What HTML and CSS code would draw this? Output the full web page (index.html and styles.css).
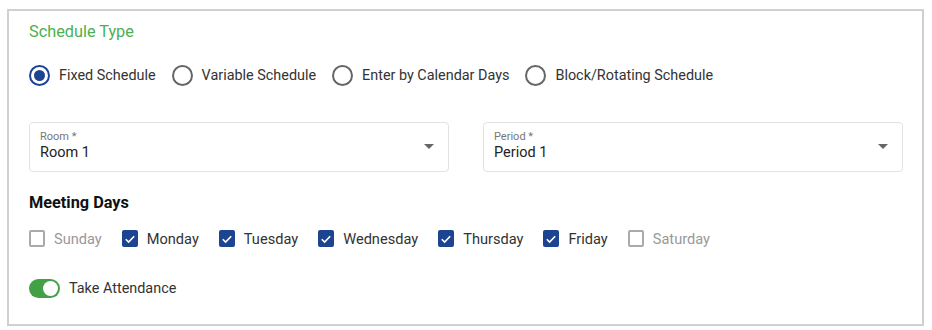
FILE: index.html
```html
<!DOCTYPE html>
<html>
<head>
<meta charset="utf-8">
<link rel="stylesheet" href="styles.css">
</head>
<body>
<div class="card">
  <div class="title">Schedule Type</div>
  <div class="radios">
    <label class="radio"><span class="circle checked"></span>Fixed Schedule</label>
    <label class="radio"><span class="circle"></span>Variable Schedule</label>
    <label class="radio"><span class="circle"></span>Enter by Calendar Days</label>
    <label class="radio"><span class="circle"></span>Block/Rotating Schedule</label>
  </div>
  <div class="selects">
    <div class="select">
      <div class="sel-text">
        <div class="sel-label">Room *</div>
        <div class="sel-value">Room 1</div>
      </div>
      <span class="arrow"></span>
    </div>
    <div class="select">
      <div class="sel-text">
        <div class="sel-label">Period *</div>
        <div class="sel-value">Period 1</div>
      </div>
      <span class="arrow"></span>
    </div>
  </div>
  <div class="section">Meeting Days</div>
  <div class="days">
    <label class="day off"><span class="box"></span>Sunday</label>
    <label class="day"><span class="box checked"><svg viewBox="0 0 16 16" width="16" height="16"><path d="M3.8 8.2 L6.6 11 L12.2 5.2" fill="none" stroke="#fff" stroke-width="1.6"/></svg></span>Monday</label>
    <label class="day"><span class="box checked"><svg viewBox="0 0 16 16" width="16" height="16"><path d="M3.8 8.2 L6.6 11 L12.2 5.2" fill="none" stroke="#fff" stroke-width="1.6"/></svg></span>Tuesday</label>
    <label class="day"><span class="box checked"><svg viewBox="0 0 16 16" width="16" height="16"><path d="M3.8 8.2 L6.6 11 L12.2 5.2" fill="none" stroke="#fff" stroke-width="1.6"/></svg></span>Wednesday</label>
    <label class="day"><span class="box checked"><svg viewBox="0 0 16 16" width="16" height="16"><path d="M3.8 8.2 L6.6 11 L12.2 5.2" fill="none" stroke="#fff" stroke-width="1.6"/></svg></span>Thursday</label>
    <label class="day"><span class="box checked"><svg viewBox="0 0 16 16" width="16" height="16"><path d="M3.8 8.2 L6.6 11 L12.2 5.2" fill="none" stroke="#fff" stroke-width="1.6"/></svg></span>Friday</label>
    <label class="day off"><span class="box"></span>Saturday</label>
  </div>
  <div class="toggle-row">
    <span class="toggle"><span class="knob"></span></span>
    <span class="toggle-label">Take Attendance</span>
  </div>
</div>
</body>
</html>
```
FILE: styles.css
```css
* { box-sizing: border-box; }
body {
  margin: 0;
  background: #fff;
  font-family: Roboto, "Liberation Sans", sans-serif;
  color: #333;
}
.card {
  margin: 9px 8px 0 7px;
  height: 317px;
  border: 2px solid #d0d0d0;
  padding: 11px 19px 0 20px;
}
.title {
  font-size: 16.3px;
  line-height: 20px;
  color: #4caf50;
}
.radios {
  display: flex;
  gap: 16px;
  margin-top: 23px;
  height: 21px;
  align-items: center;
}
.radio {
  display: flex;
  align-items: center;
  gap: 9px;
  font-size: 14.4px;
  color: #333;
}
.circle {
  width: 21px;
  height: 21px;
  border-radius: 50%;
  border: 2px solid #666;
  display: flex;
  align-items: center;
  justify-content: center;
}
.circle.checked {
  border-color: #1d4491;
}
.circle.checked::after {
  content: "";
  width: 11px;
  height: 11px;
  border-radius: 50%;
  background: #1d4491;
}
.selects {
  display: flex;
  gap: 34px;
  margin-top: 36px;
}
.select {
  flex: 1;
  height: 50px;
  border: 1px solid #e2e2e2;
  border-radius: 4px;
  display: flex;
  align-items: center;
  padding: 0 14px 0 10px;
}
.sel-text {
  flex: 1;
  margin-top: -3px;
}
.sel-label {
  font-size: 11px;
  line-height: 13px;
  color: #777;
}
.sel-value {
  font-size: 14.5px;
  line-height: 19px;
  color: #222;
}
.arrow {
  width: 0;
  height: 0;
  border-left: 5px solid transparent;
  border-right: 5px solid transparent;
  border-top: 5px solid #666;
  margin-top: -1px;
}
.section {
  margin-top: 21px;
  font-size: 16.3px;
  font-weight: 700;
  line-height: 20px;
  color: #111;
}
.days {
  display: flex;
  gap: 20px;
  margin-top: 17px;
  height: 17px;
  align-items: center;
}
.day {
  display: flex;
  align-items: center;
  gap: 9px;
  font-size: 14.6px;
  color: #333;
}
.day.off { color: #999; }
.box {
  width: 16px;
  height: 17px;
  border: 2px solid #aaa;
  border-radius: 2px;
  display: flex;
}
.box.checked {
  background: #1d4491;
  border: none;
}
.box svg { display: block; margin: auto; }
.toggle-row {
  display: flex;
  align-items: center;
  gap: 9px;
  margin-top: 32px;
}
.toggle {
  width: 31px;
  height: 19px;
  border-radius: 10px;
  background: #43a047;
  position: relative;
}
.knob {
  position: absolute;
  right: 2px;
  top: 2px;
  width: 15px;
  height: 15px;
  border-radius: 50%;
  background: #fff;
}
.toggle-label {
  font-size: 14.4px;
  color: #333;
}
```
